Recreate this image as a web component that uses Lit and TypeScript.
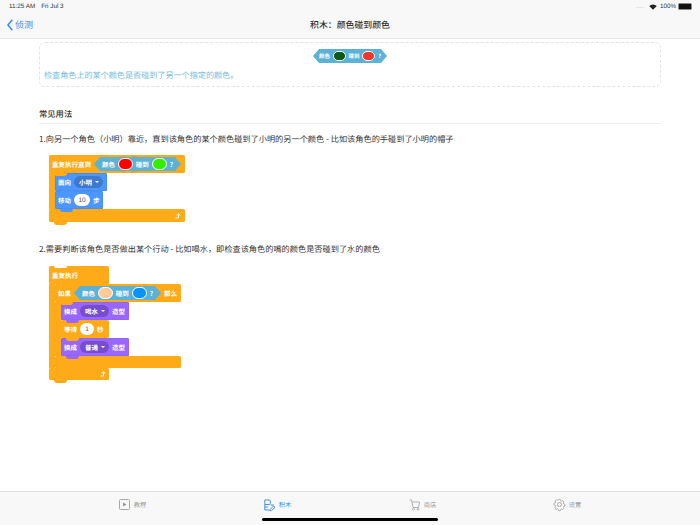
import { LitElement, html, css, svg } from "lit";
import { customElement } from "lit/decorators.js";

const play = svg`<rect x=".5" y=".5" width="10" height="10" rx="1" fill="none" stroke="#a8a8a8" stroke-width="1"/><path d="M4 3.500l3.500 2-3.500 2z" fill="#999"/>`;
const blocks = svg`<path d="M.8 1h4.500a1 1 0 0 1 1 1v2.500a1 1 0 0 1-1 1H.8zM.8 5.500v5.500h4.500M.8 8h3" fill="none" stroke="#4a90e2" stroke-width="1"/><path d="M6 10.500l3.500-3.500 1.500 1.300-3.500 3.300H5.800zM6.500 6h3.500" fill="none" stroke="#4a90e2" stroke-width="1"/>`;
const cart = svg`<path d="M.5 1h2l1.500 7.500h5.500l1-5.500H3" fill="none" stroke="#a8a8a8" stroke-width=".9"/><circle cx="4.500" cy="10.300" r="1" fill="none" stroke="#a8a8a8" stroke-width=".8"/><circle cx="9" cy="10.300" r="1" fill="none" stroke="#a8a8a8" stroke-width=".8"/>`;
const gear = svg`<circle cx="5.500" cy="5.500" r="2" fill="none" stroke="#a0a0a0" stroke-width=".9"/><path d="M5 .7h2l.3 1.500 1.300.6 1.300-.8 1.300 1.500-.8 1.300.5 1.200 1.500.3v2l-1.500.3-.5 1.200.8 1.300-1.400 1.400-1.300-.8-1.200.5-.3 1.500H5l-.3-1.500-1.200-.5-1.300.8L.8 9.900l.8-1.300-.5-1.200L-.4 7.100v-2l1.500-.3.500-1.200-.8-1.300 1.400-1.400 1.300.8 1.200-.5z" transform="translate(.3 -.1) scale(.86)" fill="none" stroke="#a0a0a0" stroke-width=".9"/>`;

@customElement("app-root")
export class AppRoot extends LitElement {
  static styles = css`
    :host { display: block; width: 700px; height: 525px; background: #fff; overflow: hidden; position: relative;
      font-family: "Noto Sans CJK SC", "Liberation Sans", sans-serif; color: #333; text-rendering: geometricPrecision; }
    .page { display: flex; flex-direction: column; height: 525px; }
    .head { height: 38px; flex: none; background: #f8f8f8; border-bottom: 1px solid #e6e6e6; box-sizing: content-box; display: flex; flex-direction: column; }
    .status { height: 13px; display: flex; align-items: center; padding: 0 8px 0 9px; font: 6.300px "Liberation Sans", sans-serif; color: #333; }
    .status .date { margin-left: 6px; }
    .status .sp { flex: 1; }
    .status .dots { color: #aaa; letter-spacing: .2px; margin-right: 5px; }
    .status .pct { margin: 0 2px 0 3px; }
    .bat { width: 12px; height: 5px; background: #111; border: .5px solid #888; border-radius: 1.500px; }
    .nav { flex: 1; display: grid; grid-template-columns: 1fr auto 1fr; align-items: center; padding: 0 0 2px; }
    .back { display: flex; align-items: center; gap: 2px; color: #2f8ff0; font-size: 9px; margin-left: 7px; }
    .title { font-size: 8.900px; color: #333; font-weight: 500; }
    .main { flex: 1; padding: 3px 39px 0; display: flex; flex-direction: column; }
    .card { height: 45px; box-sizing: border-box; border: 1px dashed #e4e4e4; border-radius: 6px; display: flex; flex-direction: column; padding: 6px 4px 0; }
    .card .c { display: flex; justify-content: center; }
    .desc { margin-top: 7px; font-size: 8.100px; line-height: 12px; color: #74bddc; }
    h3 { margin: 21px 0 0; font-size: 8.300px; line-height: 12px; font-weight: 500; color: #333; padding-bottom: 3px; border-bottom: 1.500px solid #eee; }
    .p { margin: 9px 0 0; font-size: 8.200px; line-height: 12px; color: #333; white-space: nowrap; }
    .stack { display: flex; flex-direction: column; align-items: flex-start; font-size: 6.500px; color: #fff; font-weight: 700; margin-left: 10px; }
    .s1 { margin-top: 10px; }
    .s2 { margin-top: 11px; }
    .gap2 { margin-top: 21px; }
    .b { height: 18px; display: flex; align-items: center; gap: 3px; padding: 0 3px; box-sizing: border-box; position: relative; border-radius: 1.500px; }
    .b.notch::after { content: ""; position: absolute; left: 5px; bottom: -3px; width: 13px; height: 3px; background: inherit; border-radius: 0 0 3px 3px; z-index: 2; }
    .o { background: #ffab19; } .bl { background: #4c97ff; } .pu { background: #9966ff; }
    .pu { box-shadow: inset 0 0 0 .5px #8f5fee; }
    .bl { box-shadow: inset 0 0 0 .5px #4587e6; }
    .arm { display: flex; }
    .barmo { width: 6px; background: #ffab19; flex: none; }
    .col { display: flex; flex-direction: column; align-items: flex-start; }
    .w136 { width: 136px; } .w51 { width: 52px; } .w48 { width: 48px; } .w60 { width: 60px; }
    .w126 { width: 126px; } .w68 { width: 68px; }
    .foot1 { height: 13px; justify-content: flex-end; padding-right: 4px; }
    .foot2 { height: 12px; }
    .foot3 { height: 12px; justify-content: flex-end; padding-right: 3px; }
    .topn::before { content: ""; position: absolute; left: 5px; top: 0; width: 13px; height: 2px; background: #fff; border-radius: 0 0 3px 3px; }
    .bool { background: #5cb1d6; clip-path: polygon(0 50%, 6px 0, calc(100% - 6px) 0, 100% 50%, calc(100% - 6px) 100%, 6px 100%); display: flex; align-items: center; justify-content: space-between; box-sizing: border-box; height: 14px; padding: 0 8px; }
    .bool.w84 { width: 87px; }
    .oval { width: 15px; height: 12px; border-radius: 6px; border: .7px solid #fff; box-sizing: border-box; flex: none; }
    .bool.small { width: 74px; font-size: 5.500px; color: #fff; font-weight: 700; padding: 0 6px; }
    .small .oval { width: 13px; height: 10px; }
    .dd { height: 12px; border-radius: 6px; display: flex; align-items: center; gap: 3px; padding: 0 4px 0 5px; font-size: 6.500px; }
    .dd.a { background: #3d79cc; } .dd.b2 { background: #774dcb; }
    .dd i { width: 0; height: 0; border: 2px solid transparent; border-top: 2.500px solid #fff; border-bottom: 0; }
    .num { min-width: 16px; height: 12px; border-radius: 6px; background: #fff; color: #555; display: flex; align-items: center; justify-content: center; font: 6.500px "Liberation Sans", sans-serif; }
    .num.n1 { min-width: 14px; }
    .loop { width: 6px; height: 6px; }
    .tabs { height: 34px; flex: none; box-sizing: border-box; background: #f8f8f8; border-top: 1px solid #e2e2e2; display: flex; padding: 0 60px; }
    .tab { flex: 1; display: flex; align-items: flex-start; justify-content: center; gap: 4px; padding-top: 7px; font-size: 6.300px; color: #999; line-height: 11px; }
    .tab.on { color: #2f8ff0; }
    .tab svg { width: 11px; height: 11px; overflow: visible; }
    .home { position: absolute; left: 262px; top: 518px; width: 176px; height: 3px; border-radius: 2px; background: #000; }
  `;

  private bool(a: string, b: string, cls = "w84") {
    return html`<div class="bool ${cls}"><span>颜色</span><span class="oval" style="background:${a}"></span><span>碰到</span><span class="oval" style="background:${b}"></span><span>?</span></div>`;
  }

  private loop() {
    return html`<svg class="loop" viewBox="0 0 6 6"><path d="M.5 5h3V1.500M2 2.500L3.500.5 5 2.500" fill="none" stroke="#fff" stroke-width="1"/></svg>`;
  }

  render() {
    return html`
      <div class="page">
        <header class="head">
          <div class="status"><span>11:25 AM</span><span class="date">Fri Jul 3</span><span class="sp"></span><span class="dots">....</span>
            <svg width="8" height="6" viewBox="0 0 8 6"><path d="M4 5.800L.2 2a5.400 5.400 0 0 1 7.600 0z" fill="#222"/></svg>
            <span class="pct">100%</span><span class="bat"></span></div>
          <div class="nav">
            <div class="back"><svg width="6" height="12" viewBox="0 0 6 12"><path d="M5.300 .8L.9 6l4.400 5.200" fill="none" stroke="#2f8ff0" stroke-width="1.500"/></svg>侦测</div>
            <div class="title">积木：颜色碰到颜色</div><div></div>
          </div>
        </header>
        <main class="main">
          <div class="card">
            <div class="c">${this.bool("#0b5a12", "#f4352a", "small")}</div>
            <div class="desc">检查角色上的某个颜色是否碰到了另一个指定的颜色。</div>
          </div>
          <h3>常见用法</h3>
          <p class="p">1.向另一个角色（小明）靠近，直到该角色的某个颜色碰到了小明的另一个颜色 - 比如该角色的手碰到了小明的帽子</p>
          <div class="stack s1">
            <div class="b o w136 notch"><span>重复执行直到</span>${this.bool("#ff0000", "#33ee00")}</div>
            <div class="arm"><div class="barmo"></div><div class="col">
              <div class="b bl w51 notch"><span>面向</span><span class="dd a">小明<i></i></span></div>
              <div class="b bl w48 notch"><span>移动</span><span class="num">10</span><span>步</span></div>
            </div></div>
            <div class="b o w136 foot1 notch">${this.loop()}</div>
          </div>
          <p class="p gap2">2.需要判断该角色是否做出某个行动 - 比如喝水，即检查该角色的嘴的颜色是否碰到了水的颜色</p>
          <div class="stack s2">
            <div class="b o w60 topn"><span>重复执行</span></div>
            <div class="arm"><div class="barmo"></div><div class="col">
              <div class="b o w126 notch"><span>如果</span>${this.bool("#ffcc99", "#0a94f5")}<span>那么</span></div>
              <div class="arm"><div class="barmo"></div><div class="col">
                <div class="b pu w68 notch"><span>换成</span><span class="dd b2">喝水<i></i></span><span>造型</span></div>
                <div class="b o w48 notch"><span>等待</span><span class="num n1">1</span><span>秒</span></div>
                <div class="b pu w68 notch"><span>换成</span><span class="dd b2">普通<i></i></span><span>造型</span></div>
              </div></div>
              <div class="b o w126 foot2 notch"></div>
            </div></div>
            <div class="b o w60 foot3 notch">${this.loop()}</div>
          </div>
        </main>
        <nav class="tabs">
          <div class="tab"><svg viewBox="0 0 11 11">${play}</svg>教程</div>
          <div class="tab on"><svg viewBox="0 0 11 11">${blocks}</svg>积木</div>
          <div class="tab"><svg viewBox="0 0 11 11">${cart}</svg>商店</div>
          <div class="tab"><svg viewBox="0 0 11 11">${gear}</svg>设置</div>
        </nav>
      </div>
      <div class="home"></div>
    `;
  }
}
